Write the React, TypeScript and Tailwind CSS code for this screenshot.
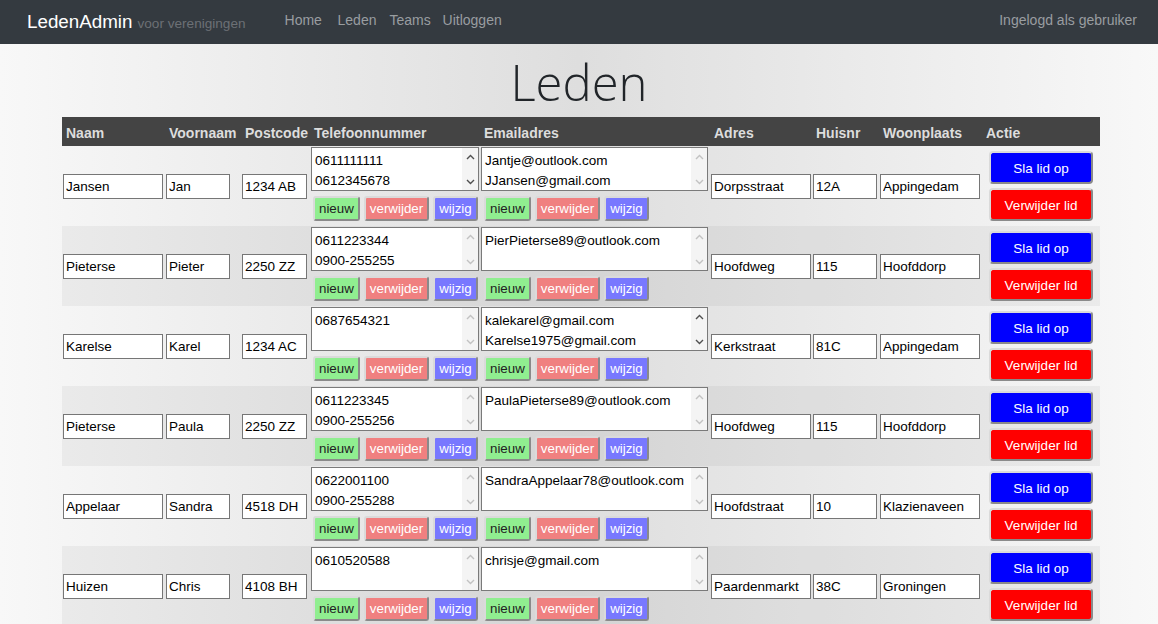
import React from "react";

type Member = {
  naam: string;
  voornaam: string;
  postcode: string;
  telefoon: string[];
  telScroll?: boolean;
  email: string[];
  mailScroll?: boolean;
  adres: string;
  huisnr: string;
  woonplaats: string;
};

const members: Member[] = [
  {
    naam: "Jansen",
    voornaam: "Jan",
    postcode: "1234 AB",
    telefoon: ["0611111111", "0612345678", "0613579246"],
    telScroll: true,
    email: ["Jantje@outlook.com", "JJansen@gmail.com"],
    adres: "Dorpsstraat",
    huisnr: "12A",
    woonplaats: "Appingedam",
  },
  {
    naam: "Pieterse",
    voornaam: "Pieter",
    postcode: "2250 ZZ",
    telefoon: ["0611223344", "0900-255255"],
    email: ["PierPieterse89@outlook.com"],
    adres: "Hoofdweg",
    huisnr: "115",
    woonplaats: "Hoofddorp",
  },
  {
    naam: "Karelse",
    voornaam: "Karel",
    postcode: "1234 AC",
    telefoon: ["0687654321"],
    email: ["kalekarel@gmail.com", "Karelse1975@gmail.com", "k.karelse@outlook.com"],
    mailScroll: true,
    adres: "Kerkstraat",
    huisnr: "81C",
    woonplaats: "Appingedam",
  },
  {
    naam: "Pieterse",
    voornaam: "Paula",
    postcode: "2250 ZZ",
    telefoon: ["0611223345", "0900-255256"],
    email: ["PaulaPieterse89@outlook.com"],
    adres: "Hoofdweg",
    huisnr: "115",
    woonplaats: "Hoofddorp",
  },
  {
    naam: "Appelaar",
    voornaam: "Sandra",
    postcode: "4518 DH",
    telefoon: ["0622001100", "0900-255288"],
    email: ["SandraAppelaar78@outlook.com"],
    adres: "Hoofdstraat",
    huisnr: "10",
    woonplaats: "Klazienaveen",
  },
  {
    naam: "Huizen",
    voornaam: "Chris",
    postcode: "4108 BH",
    telefoon: ["0610520588"],
    email: ["chrisje@gmail.com"],
    adres: "Paardenmarkt",
    huisnr: "38C",
    woonplaats: "Groningen",
  },
];

const cols = "grid grid-cols-[103px_76px_69px_170px_230px_102px_67px_103px_118px]";

function Chevron({ up, dark }: { up?: boolean; dark?: boolean }) {
  return (
    <svg width="9" height="6" viewBox="0 0 9 6">
      <path
        d={up ? "M1 5 L4.5 1.5 L8 5" : "M1 1 L4.5 4.5 L8 1"}
        fill="none"
        stroke={dark ? "#505050" : "#c2c2c2"}
        strokeWidth="1.4"
      />
    </svg>
  );
}

function TextBox({ lines, width, dark }: { lines: string[]; width: string; dark?: boolean }) {
  return (
    <div className={`flex h-[44px] border border-[#7a7a7a] bg-white ${width}`}>
      <textarea
        readOnly
        value={lines.join("\n")}
        className="min-w-0 flex-1 resize-none overflow-hidden bg-transparent pl-[3px] pt-[3px] text-[13.5px] leading-[20px] text-black outline-none"
      />
      <div className="flex w-[16px] flex-col justify-between bg-[#f4f4f4]">
        <div className="flex h-[17px] items-center justify-center">
          <Chevron up dark={dark} />
        </div>
        <div className="flex h-[17px] items-center justify-center">
          <Chevron dark={dark} />
        </div>
      </div>
    </div>
  );
}

const bevel =
  "border-2 border-t-[#dadada] border-l-[#dadada] border-r-[#8a8a8a] border-b-[#8a8a8a]";

function SmallButtons() {
  return (
    <div className="ml-[2px] mt-[5px] flex gap-[4px]">
      <button className={`h-[25px] rounded-[3px] bg-[#90ee90] px-1 text-[13.33px] leading-none text-[#222] ${bevel}`}>
        nieuw
      </button>
      <button className={`h-[25px] rounded-[3px] bg-[#f08080] px-1 text-[13.33px] leading-none text-white ${bevel}`}>
        verwijder
      </button>
      <button className={`h-[25px] rounded-[3px] bg-[#7878ff] px-1 text-[13.33px] leading-none text-white ${bevel}`}>
        wijzig
      </button>
    </div>
  );
}

function Field({ value, width }: { value: string; width: string }) {
  return (
    <input
      readOnly
      value={value}
      className={`ml-px h-[25px] border border-[#767676] bg-white pl-[2px] pt-px text-[13.5px] text-black outline-none ${width}`}
    />
  );
}

export default function App() {
  const headers = ["Naam", "Voornaam", "Postcode", "Telefoonnummer", "Emailadres", "Adres", "Huisnr", "Woonplaats", "Actie"];

  return (
    <div
      className="min-h-screen bg-[linear-gradient(to_right,#f8f8f8,#dedede,#f8f8f8)] text-black"
      style={{ fontFamily: '"Liberation Sans", Arial, sans-serif' }}
    >
      <nav className="flex h-[44px] items-center bg-[#343a40] pl-[27px] pr-[21px]">
        <div className="flex items-baseline">
          <span className="text-[18.8px] text-white">LedenAdmin</span>
          <span className="ml-[5px] text-[13.6px] text-[#6c7075]">voor verenigingen</span>
        </div>
        <div className="mb-[3px] ml-[39px] flex text-[14px] text-[#999da0]">
          <a className="w-[53px]">Home</a>
          <a className="w-[52px]">Leden</a>
          <a className="w-[53px]">Teams</a>
          <a>Uitloggen</a>
        </div>
        <div className="mb-[3px] ml-auto text-[14px] text-[#999da0]">Ingelogd als gebruiker</div>
      </nav>

      <h1
        className="mt-[10px] text-center text-[49px] font-light leading-[56px] text-[#212529]"
        style={{ fontFamily: '"Open Sans", sans-serif' }}
      >
        Leden
      </h1>

      <div className="ml-[62px] mt-[7px] w-[1038px]">
        <div className={`${cols} h-[29px] items-center bg-[#444444] pt-[4px] text-[14px] font-bold text-[#dddddd]`}>
          {headers.map((h) => (
            <div key={h} className="pl-1">
              {h}
            </div>
          ))}
        </div>

        {members.map((m, i) => (
          <div key={i} className={`${cols} h-[80px] items-center ${i % 2 === 1 ? "bg-black/[0.045]" : ""}`}>
            <Field value={m.naam} width="w-[100px]" />
            <Field value={m.voornaam} width="w-[64px]" />
            <Field value={m.postcode} width="w-[65px]" />
            <div className="ml-px self-start pt-[1px]">
              <TextBox lines={m.telefoon} width="w-[168px]" dark={m.telScroll} />
              <SmallButtons />
            </div>
            <div className="ml-px self-start pt-[1px]">
              <TextBox lines={m.email} width="w-[227px]" dark={m.mailScroll} />
              <div className="ml-px">
                <SmallButtons />
              </div>
            </div>
            <Field value={m.adres} width="w-[100px]" />
            <Field value={m.huisnr} width="w-[64px]" />
            <Field value={m.woonplaats} width="w-[100px]" />
            <div className="flex flex-col items-center gap-[4px]">
              <button className={`h-[33px] w-[104px] rounded-[4px] bg-[#0000ff] pt-[4px] text-[13.5px] text-white ${bevel}`}>
                Sla lid op
              </button>
              <button className={`h-[33px] w-[104px] rounded-[4px] bg-[#ff0000] pt-[4px] text-[13.5px] text-white ${bevel}`}>
                Verwijder lid
              </button>
            </div>
          </div>
        ))}
      </div>
    </div>
  );
}
